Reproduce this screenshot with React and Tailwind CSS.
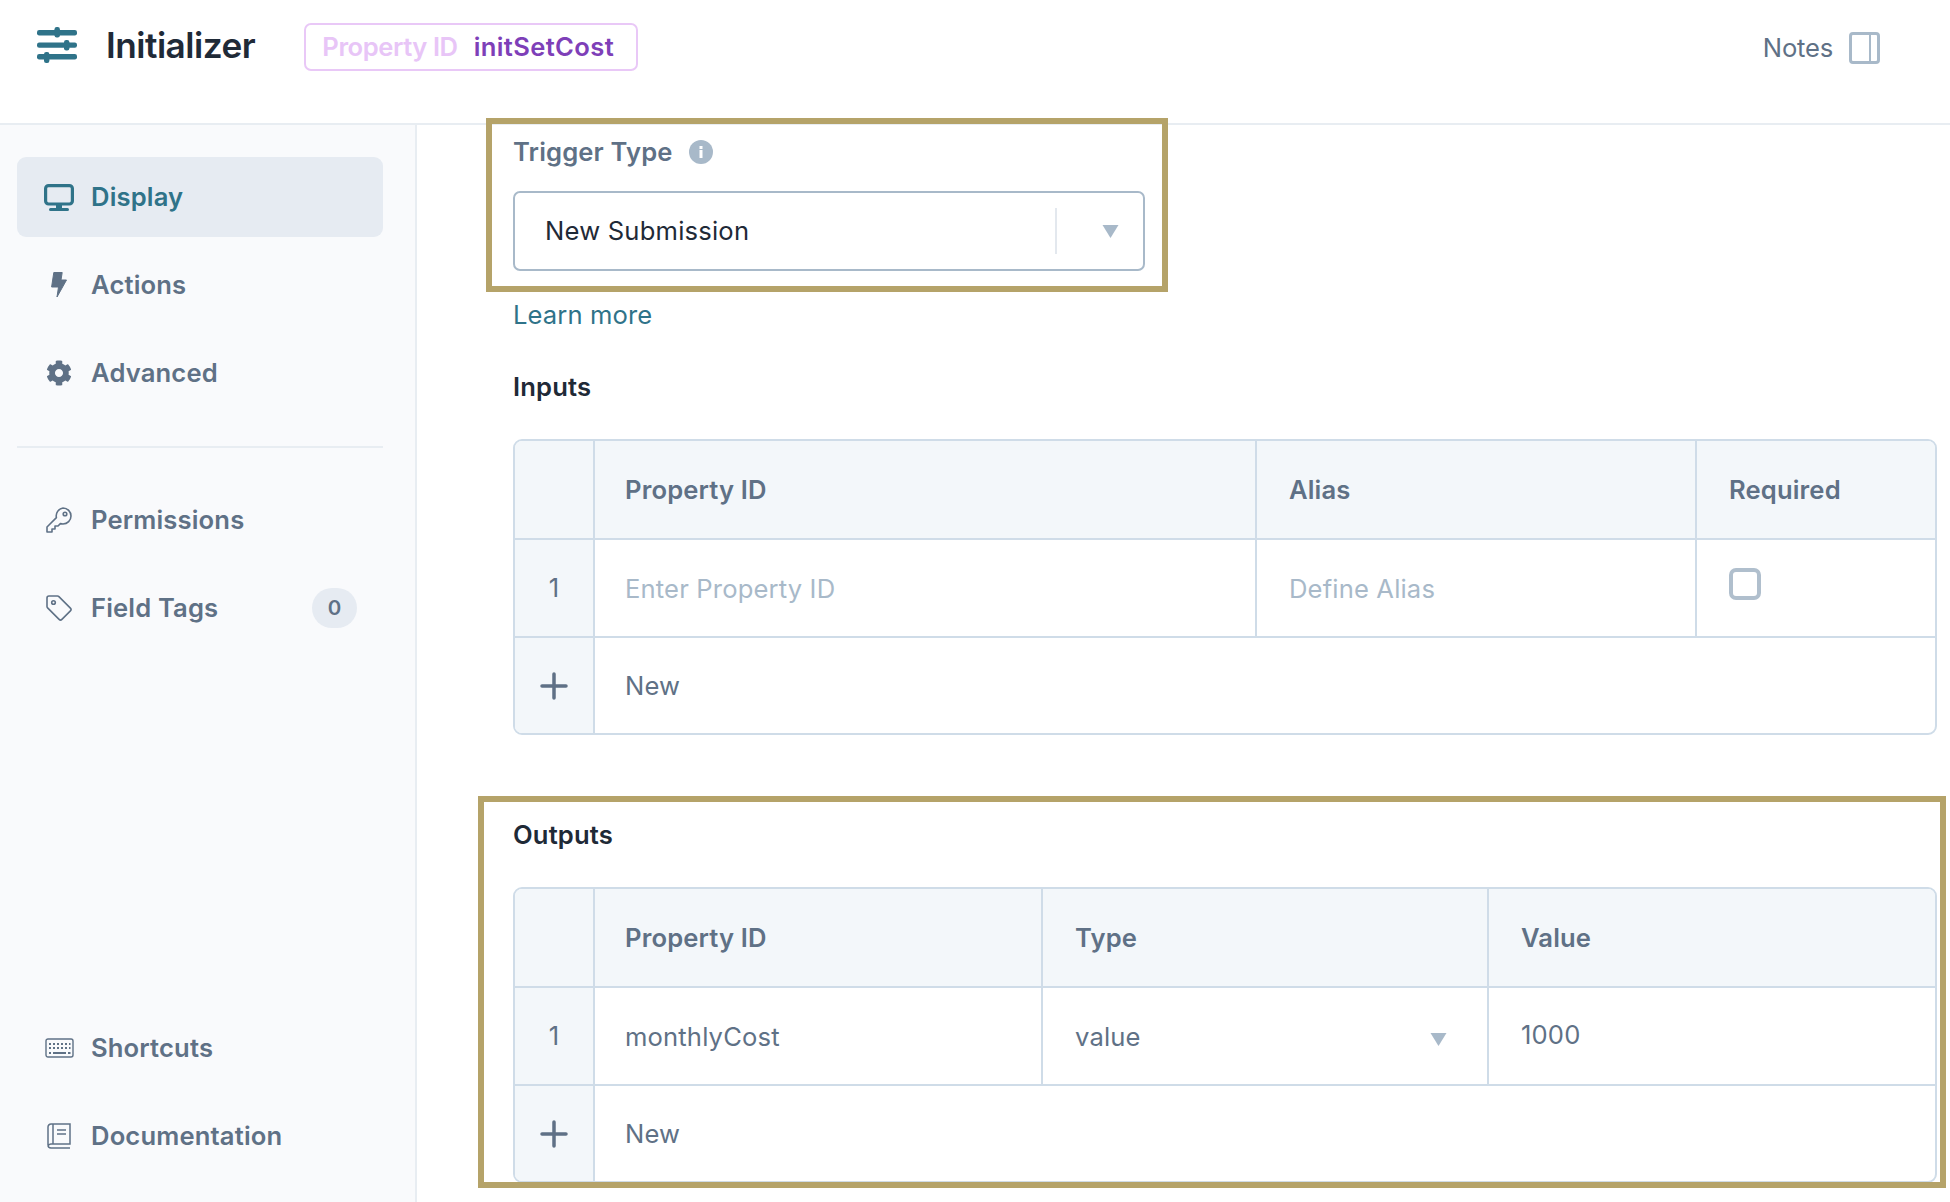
import React from "react";
import { FaCog } from "react-icons/fa";

const font = { fontFamily: "Inter, sans-serif" };

function Logo() {
  return (
    <svg width="40" height="36" viewBox="0 0 40 36" fill="#2f7389">
      <rect x="0" y="3" width="40" height="5.4" rx="2.2" />
      <rect x="0" y="15.5" width="40" height="5.2" rx="2.2" />
      <rect x="0" y="27" width="40" height="5.4" rx="2.2" />
      <rect x="17.5" y="0" width="5.4" height="10.5" rx="2.2" />
      <rect x="27" y="13" width="5.4" height="10.5" rx="2.2" />
      <rect x="7" y="25" width="5.4" height="11" rx="2.2" />
    </svg>
  );
}

function Arrow({ className }) {
  return (
    <svg className={className} width="17" height="13" viewBox="0 0 17 13" fill="#a8b9c9">
      <path d="M0.5 0h16L8.5 13z" />
    </svg>
  );
}

const Desktop = () => (
  <svg width="30" height="27" viewBox="0 0 30 27" fill="none" stroke="#2f7389" strokeWidth="3.2">
    <rect x="1.6" y="1.6" width="26.8" height="18.4" rx="3" />
    <path d="M15 21v4" strokeWidth="6" />
    <path d="M6.5 25.5h17" strokeWidth="3" strokeLinecap="round" />
  </svg>
);
const Bolt = () => (
  <svg width="16" height="26" viewBox="0 0 16 26" fill="#5f7186" stroke="#5f7186" strokeWidth="1" strokeLinejoin="round">
    <path d="M2.8.5h8.4L10 8h5.5L6 25l1.5-10H.6z" />
  </svg>
);
const Key = () => (
  <svg width="26" height="26" viewBox="0 0 26 26" fill="none" stroke="#5f7186" strokeWidth="1.6" strokeLinejoin="round">
    <path d="M17 1a8 8 0 0 1 0 16c-.9 0-1.8-.2-2.6-.4L12 19H9v3H6v3H1v-5l9.4-9.4A8 8 0 0 1 17 1z" />
    <circle cx="19" cy="7" r="1.8" />
  </svg>
);
const Tag = () => (
  <svg width="26" height="26" viewBox="0 0 26 26" fill="none" stroke="#5f7186" strokeWidth="1.6" strokeLinejoin="round">
    <path d="M1 3a2 2 0 0 1 2-2h8.5a2 2 0 0 1 1.4.6l11.5 11.5a2 2 0 0 1 0 2.8l-8.5 8.5a2 2 0 0 1-2.8 0L1.6 12.9A2 2 0 0 1 1 11.5z" />
    <circle cx="7.5" cy="7.5" r="1.8" />
  </svg>
);
const Keyboard = () => (
  <svg width="29" height="20" viewBox="0 0 29 20" fill="none" stroke="#5f7186" strokeWidth="1.4">
    <rect x="1" y="1" width="27" height="18" rx="2" />
    <path d="M4 6h2M8 6h2M12 6h2M16 6h2M20 6h2M24 6h1.5M4 10h2M8 10h2M12 10h2M16 10h2M20 10h2M24 10h1.5M4 15h2M8 15h13M23 15h2.5" strokeWidth="2" />
  </svg>
);
const Book = () => (
  <svg width="24" height="26" viewBox="0 0 24 26" fill="none" stroke="#5f7186" strokeWidth="1.5">
    <path d="M23 25H4a3 3 0 0 1-3-3V4a3 3 0 0 1 3-3h19v20H4a3 3 0 0 0-3 2" />
    <path d="M6 1v20M10 7h9M10 11h9" />
  </svg>
);

function NavItem({ icon, label, active, badge, className = "" }) {
  return (
    <div
      className={`flex h-[80px] items-center rounded-[9px] pl-[26px] pr-[26px] ${active ? "bg-[#e6ebf2] text-[#2f7389]" : "text-[#5f7186]"} ${className}`}
    >
      <span className="flex w-[32px] justify-center">{icon}</span>
      <span className="ml-[16px] flex-1 pt-[1px] text-[25.6px] font-semibold tracking-[0.15px]">{label}</span>
      {badge && (
        <span className="flex h-[40px] w-[45px] items-center justify-center rounded-full bg-[#e6ebf2] text-[20.5px] font-semibold">
          {badge}
        </span>
      )}
    </div>
  );
}

function Table({ cols, head, rows }) {
  const line = "border-[#cfdce8]";
  return (
    <div className={`overflow-hidden rounded-[9px] border-2 ${line} text-[25.6px] tracking-[0.15px] text-[#5f7186]`}>
      <div className={`grid h-[99px] border-b-2 ${line} bg-[#f3f7fa] font-semibold ${cols}`}>
        <div className={`border-r-2 ${line}`} />
        {head.map((h, i) => (
          <div
            key={h}
            className={`flex items-center pt-[1px] ${i === 0 ? "pl-[30px]" : "pl-[32px]"} ${i < head.length - 1 ? `border-r-2 ${line}` : ""}`}
          >
            {h}
          </div>
        ))}
      </div>
      <div className={`grid h-[98px] border-b-2 ${line} ${cols}`}>
        <div className={`flex items-center justify-center border-r-2 pt-[1px] ${line} bg-[#f3f7fa]`}>1</div>
        {rows.map((cell, i) => (
          <div
            key={i}
            className={`flex items-center pt-[2px] ${i === 0 ? "pl-[30px]" : "pl-[32px]"} ${i < rows.length - 1 ? `border-r-2 ${line}` : ""}`}
          >
            {cell}
          </div>
        ))}
      </div>
      <div className="flex h-[95px]">
        <div className={`flex w-[80px] items-center justify-center border-r-2 ${line} bg-[#f3f7fa]`}>
          <svg width="28" height="28" viewBox="0 0 28 28" stroke="#5f7186" strokeWidth="3.5" strokeLinecap="round">
            <path d="M14 2v24M2 14h24" />
          </svg>
        </div>
        <div className="flex items-center pl-[30px] pt-[1px]">New</div>
      </div>
    </div>
  );
}

export default function App() {
  return (
    <div className="flex h-[1202px] w-[1950px] flex-col overflow-hidden bg-white" style={font}>
      <header className="flex h-[125px] shrink-0 items-start border-b-2 border-[#e8edf2] pl-[37px] pr-[70px]">
        <div className="mt-[27px]"><Logo /></div>
        <h1 className="ml-[29px] mt-[20px] text-[35.2px] font-semibold leading-[50px] tracking-[-0.5px] text-[#1f2a37]">Initializer</h1>
        <div className="ml-[49px] mt-[23px] flex h-[48px] items-center rounded-[7px] border-[2.5px] border-[#e9c8f7] pl-[16px] pr-[22px] text-[25.6px] font-semibold">
          <span className="tracking-[-0.43px] text-[#e8c5f7]">Property ID</span>
          <span className="ml-[16px] tracking-[0.36px] text-[#7e3fb8]">initSetCost</span>
        </div>
        <div className="ml-auto mt-[32px] flex items-center">
          <span className="text-[25.6px] leading-[32px] tracking-[-0.2px] text-[#5f7186]">Notes</span>
          <div className="ml-[16px] flex h-[32px] w-[31px] justify-end rounded-[4px] border-[3px] border-[#a8b9c9] pr-[6px]">
            <div className="w-[2px] bg-[#a8b9c9]" />
          </div>
        </div>
      </header>

      <div className="flex min-h-0 flex-1">
        <aside className="flex w-[417px] shrink-0 flex-col border-r-2 border-[#e8edf2] bg-[#f9fafc] pb-[26px] pl-[17px] pr-[32px] pt-[32px]">
          <NavItem active icon={<Desktop />} label="Display" />
          <NavItem className="mt-[8px]" icon={<Bolt />} label="Actions" />
          <NavItem className="mt-[8px]" icon={<FaCog size={26} color="#5f7186" />} label="Advanced" />
          <div className="mt-[33px] h-[2px] bg-[#e8edf2]" />
          <NavItem className="mt-[32px]" icon={<Key />} label="Permissions" />
          <NavItem className="mt-[8px]" icon={<Tag />} label="Field Tags" badge="0" />
          <NavItem className="mt-auto" icon={<Keyboard />} label="Shortcuts" />
          <NavItem className="mt-[8px]" icon={<Book />} label="Documentation" />
        </aside>

        <main className="min-w-0 flex-1 pl-[96px] pr-[13px]">
          <section className="relative w-[632px] pt-[9px]">
            <div className="flex h-[36px] items-center text-[25.6px] font-semibold tracking-[0.15px] text-[#5f7186]">
              Trigger Type
              <svg className="ml-[16px]" width="24" height="24" viewBox="0 0 24 24">
                <circle cx="12" cy="12" r="12" fill="#a8b9c9" />
                <rect x="10.5" y="10" width="3" height="8" fill="#fff" />
                <rect x="10.5" y="6" width="3" height="3" fill="#fff" />
              </svg>
            </div>
            <div className="mt-[21px] flex h-[80px] items-center rounded-[7px] border-2 border-[#a8b9c9] pl-[30px] text-[25.6px] tracking-[0.2px] text-[#1f2a37]">
              <span className="flex-1">New Submission</span>
              <div className="h-[46px] w-[2px] bg-[#e3e8ee]" />
              <Arrow className="ml-[45px] mr-[24px]" />
            </div>
            <div className="pointer-events-none absolute -left-[27px] -right-[23px] -top-[7px] bottom-[-21px] border-[6px] border-[#b5a369]" />
          </section>
          <div className="mt-[26px] text-[25.6px] leading-[36px] tracking-[0.1px] text-[#2f7389]">Learn more</div>
          <h2 className="mt-[36px] text-[25.6px] font-semibold leading-[36px] tracking-[0.15px] text-[#1f2a37]">Inputs</h2>
          <div className="mt-[34px]">
            <Table
              cols="grid-cols-[80px_662px_440px_1fr]"
              head={["Property ID", "Alias", "Required"]}
              rows={[
                <span className="text-[#a8b9c9]">Enter Property ID</span>,
                <span className="text-[#a8b9c9]">Define Alias</span>,
                <div className="-mt-[10px] h-[32px] w-[32px] rounded-[7px] border-[4px] border-[#b0bfcd]" />,
              ]}
            />
          </div>
          <section className="relative mt-[82px] h-[371px]">
            <h2 className="text-[25.6px] font-semibold leading-[36px] tracking-[0.15px] text-[#1f2a37]">Outputs</h2>
            <div className="mt-[34px]">
              <Table
                cols="grid-cols-[80px_448px_446px_1fr]"
                head={["Property ID", "Type", "Value"]}
                rows={[
                  <span>monthlyCost</span>,
                  <div className="flex w-full items-center justify-between pr-[40px]">
                    <span>value</span>
                    <Arrow className="mt-[5px]" />
                  </div>,
                  <span className="-mt-[3px]">1000</span>,
                ]}
              />
            </div>
            <div className="pointer-events-none absolute -left-[35px] -right-[9px] -top-[21px] bottom-0 border-[6px] border-[#b5a369]" />
          </section>
        </main>
      </div>
    </div>
  );
}
